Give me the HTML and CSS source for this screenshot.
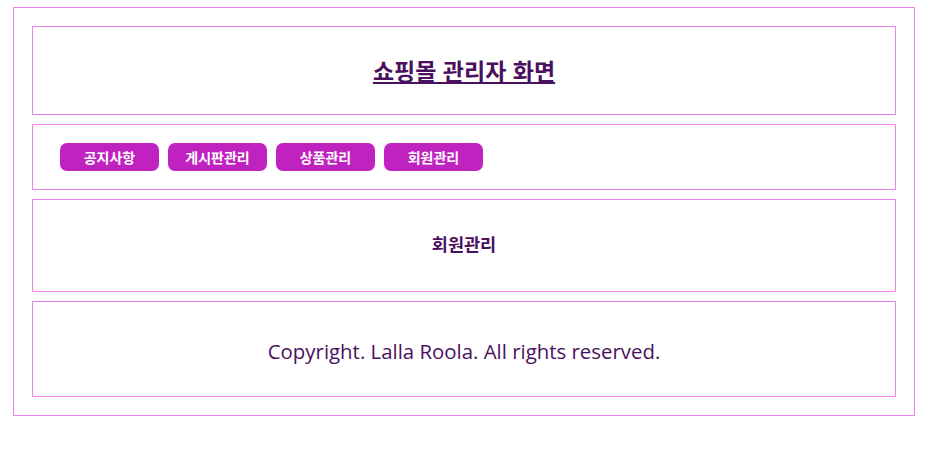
FILE: index.html
```html
<!DOCTYPE html>
<html lang="ko">
  <head>
    <meta charset="UTF-8">
    <meta name="viewport" content="width=device-width, initial-scale=1.0">
    <title>쇼핑몰 관리자 화면</title>
    <link rel="stylesheet" href="styles.css">
  </head>
  <body>
    <div class="wrap">
      <header class="box header">
        <h1><a href="#">쇼핑몰 관리자 화면</a></h1>
      </header>
      <nav class="box menu">
        <a class="btn" href="#">공지사항</a>
        <a class="btn" href="#">게시판관리</a>
        <a class="btn" href="#">상품관리</a>
        <a class="btn" href="#">회원관리</a>
      </nav>
      <section class="box content">
        <p>회원관리</p>
      </section>
      <footer class="box footer">
        <p>Copyright. Lalla Roola. All rights reserved.</p>
      </footer>
    </div>
  </body>
</html>
```

FILE: styles.css
```css
body {
  margin: 0;
  font-family: "Noto Sans CJK KR", "Noto Sans", sans-serif;
  color: #4a1060;
}

.wrap {
  width: 864px;
  margin: 7px 0 0 13px;
  padding: 18px;
  border: 1px solid #ee82ee;
  display: flex;
  flex-direction: column;
  gap: 9px;
}

.box {
  border: 1px solid #ee82ee;
}

.header {
  height: 87px;
  display: flex;
  align-items: center;
  justify-content: center;
}

.header h1 {
  margin: 0 0 2px;
  font-size: 23px;
  font-weight: 700;
}

.header h1 a {
  color: #4a1060;
}

.menu {
  height: 64px;
  display: flex;
  align-items: center;
  gap: 9px;
  padding-left: 27px;
}

.btn {
  width: 99px;
  height: 28px;
  line-height: 28px;
  border-radius: 7px;
  background-color: #c022c0;
  color: #fff;
  text-align: center;
  text-decoration: none;
  font-size: 14px;
  font-weight: 700;
}

.content {
  height: 91px;
  display: flex;
  align-items: center;
  justify-content: center;
}

.content p {
  margin: 0 0 4px;
  font-size: 17.5px;
  font-weight: 700;
}

.footer {
  height: 94px;
  display: flex;
  align-items: center;
  justify-content: center;
}

.footer p {
  margin: 3px 0 0;
  font-family: "Open Sans", "Noto Sans", sans-serif;
  font-size: 20.4px;
}
```
